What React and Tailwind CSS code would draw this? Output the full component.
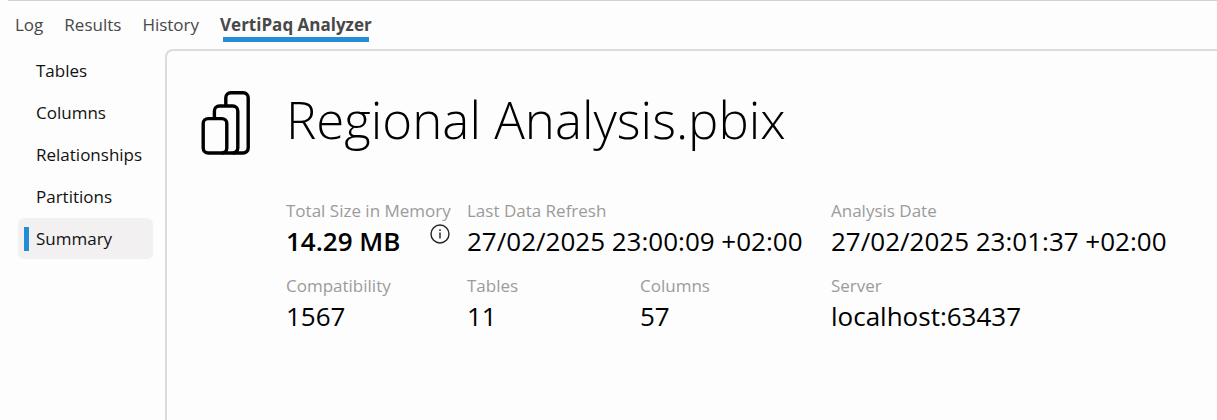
import { useState } from "react";

const tabs = ["Log", "Results", "History", "VertiPaq Analyzer"];
const sections = ["Tables", "Columns", "Relationships", "Partitions", "Summary"];

function ModelIcon() {
  return (
    <svg
      className="h-16 w-[49px] shrink-0"
      viewBox="0 0 49 64"
      fill="none"
      stroke="currentColor"
      strokeWidth="3.4"
      aria-hidden="true"
    >
      <rect x="2.2" y="27.6" width="23.6" height="34.4" rx="5" />
      <path d="M13.4 27.6V20a5 5 0 0 1 5-5h13.4a5 5 0 0 1 5 5v37a5 5 0 0 1-5 5H20.8" />
      <path d="M24.8 15V6.7a5 5 0 0 1 5-5H42.2a5 5 0 0 1 5 5V57a5 5 0 0 1-5 5H31.8" />
    </svg>
  );
}

function InfoIcon() {
  return (
    <svg className="size-5" viewBox="0 0 20 20" fill="none" aria-hidden="true">
      <circle cx="10" cy="10" r="9" stroke="currentColor" strokeWidth="1.4" />
      <circle cx="10" cy="6.2" r="0.9" fill="currentColor" />
      <path d="M10 8.5v6" stroke="currentColor" strokeWidth="1.4" />
    </svg>
  );
}

function Stat({ label, value, className = "", strong = false, info = false }) {
  return (
    <div className={className}>
      <dt className="text-[17px] leading-6 whitespace-nowrap text-[#9b9b9b]">{label}</dt>
      <dd className="flex justify-between pr-[17px] text-[26px] leading-9 whitespace-nowrap text-black">
        <span className={strong ? "font-semibold" : ""}>{value}</span>
        {info && (
          <button type="button" aria-label="About total size in memory" className="mt-px size-5 text-[#222222]">
            <InfoIcon />
          </button>
        )}
      </dd>
    </div>
  );
}

export default function App() {
  const [tab, setTab] = useState("VertiPaq Analyzer");
  const [section, setSection] = useState("Summary");

  return (
    <div className="flex min-h-screen flex-col bg-[#fdfdfd] font-['Open_Sans','Noto_Sans',sans-serif]">
      <nav aria-label="Output panes" className="ml-2 flex h-[49px] items-start gap-[21px] border-t border-[#d2d2d2] pt-3 pl-[7px]">
        {tabs.map((name) => (
          <button
            key={name}
            type="button"
            onClick={() => setTab(name)}
            className={
              "flex flex-col text-[17px] leading-6 whitespace-nowrap text-[#484848] " +
              (tab === name ? "font-bold" : "")
            }
          >
            {name}
            {tab === name && <span className="mx-[3px] h-[5px] self-stretch bg-[#238dd5]" />}
          </button>
        ))}
      </nav>
      <div className="flex flex-1">
        <nav aria-label="Analyzer sections" className="flex w-[165px] shrink-0 flex-col gap-px pt-px pr-3 pl-[18px]">
          {sections.map((name) => (
            <button
              key={name}
              type="button"
              onClick={() => setSection(name)}
              className={
                "flex h-[41px] items-center gap-[7px] rounded-md pl-1.5 text-[17px] whitespace-nowrap text-[#111111] " +
                (section === name ? "bg-[#f3f0f2]" : "")
              }
            >
              <span className={"h-6 w-[5px] " + (section === name ? "bg-[#238dd5]" : "")} />
              {name}
            </button>
          ))}
        </nav>
        <main className="min-w-0 flex-1 rounded-tl-lg border-t-2 border-l-2 border-[#dcdcdc] pt-10 pl-[34px]">
          <header className="flex items-start gap-9 text-black">
            <ModelIcon />
            <h1 className="text-[51px] leading-14 font-light whitespace-nowrap">Regional Analysis.pbix</h1>
          </header>
          <dl className="mt-11 ml-[85px] grid grid-cols-[181px_173px_191px_1fr] gap-y-[15px]">
            <Stat label="Total Size in Memory" value="14.29 MB" strong info />
            <Stat label="Last Data Refresh" value="27/02/2025 23:00:09 +02:00" className="col-span-2" />
            <Stat label="Analysis Date" value="27/02/2025 23:01:37 +02:00" />
            <Stat label="Compatibility" value="1567" />
            <Stat label="Tables" value="11" />
            <Stat label="Columns" value="57" />
            <Stat label="Server" value="localhost:63437" />
          </dl>
        </main>
      </div>
    </div>
  );
}
